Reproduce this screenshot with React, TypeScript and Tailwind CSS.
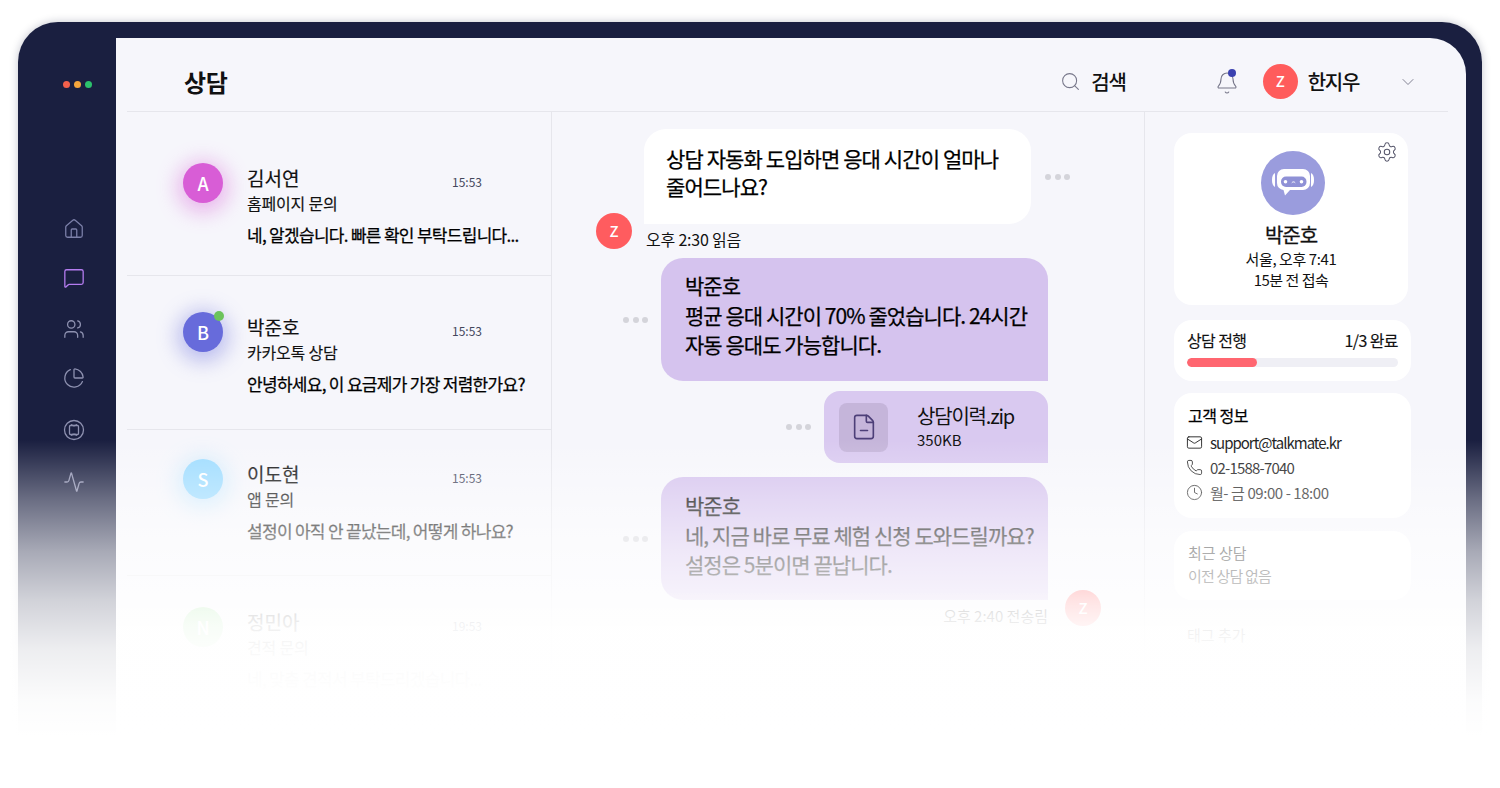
import { Activity, Bell, ChartPie, ChevronDown, Clock, FileMinus, House, Mail, MessageSquare, Phone, Search, Settings, Users } from "lucide-react";

const sideIcons = [
  { Icon: House, cls: "text-[#7b7fa8] mt-0" },
  { Icon: MessageSquare, cls: "text-[#b57cf0] mt-[27px]" },
  { Icon: Users, cls: "text-[#8e91b0] mt-[29px]" },
  { Icon: ChartPie, cls: "text-[#8e91b0] mt-[27px]" },
];

const rows = [
  { letter: "A", name: "김서연", time: "15:53", sub: "홈페이지 문의", text: "네, 알겠습니다. 빠른 확인 부탁드립니다...", box: "h-[164px] pt-[51px] border-b", avatar: "bg-[#d85dd6] shadow-[0_4px_20px_6px_rgba(216,93,214,0.4)]" },
  { letter: "B", name: "박준호", time: "15:53", sub: "카카오톡 상담", text: "안녕하세요, 이 요금제가 가장 저렴한가요?", box: "h-[154px] pt-[36px] border-b", avatar: "bg-[#676bdb] shadow-[0_4px_20px_6px_rgba(103,107,219,0.4)]", online: true },
  { letter: "S", name: "이도현", time: "15:53", sub: "앱 문의", text: "설정이 아직 안 끝났는데, 어떻게 하나요?", box: "h-[146px] pt-[29px] border-b", avatar: "bg-[#9edcff] shadow-[0_4px_20px_6px_rgba(158,220,255,0.4)]" },
  { letter: "N", name: "정민아", time: "19:53", sub: "견적 문의", text: "네, 맞춤 견적서 부탁드리겠습니다...", box: "h-[150px] pt-[31px]", avatar: "bg-[#8fe08a]" },
];

function Dots() {
  return (
    <div className="flex w-[25px] shrink-0 justify-between">
      <span className="h-[6px] w-[6px] rounded-full bg-[#d4d4da]" />
      <span className="h-[6px] w-[6px] rounded-full bg-[#d4d4da]" />
      <span className="h-[6px] w-[6px] rounded-full bg-[#d4d4da]" />
    </div>
  );
}

function BotAvatar() {
  return (
    <div className="ml-[4px] flex h-16 w-16 items-center justify-center rounded-full bg-[#9a9cdd]">
      <svg width="46" height="46" viewBox="0 0 46 46" fill="none">
        <path d="M5 13c-2 .8-3 3.500-3 7s1 6.200 3 7z" fill="#fff" />
        <path d="M41 13c2 .8 3 3.500 3 7s-1 6.200-3 7z" fill="#fff" />
        <path d="M14 9h19a7 7 0 0 1 7 7v7a7 7 0 0 1-7 7H20l-5 5.500-1.500-5.500a7 7 0 0 1-6.500-7v-7a7 7 0 0 1 7-7z" fill="#fff" />
        <rect x="11" y="16.500" width="25.500" height="10.500" rx="5" fill="#8f91d6" />
        <circle cx="15.500" cy="21.800" r="1.800" fill="#fff" />
        <circle cx="31.500" cy="21.800" r="1.800" fill="#fff" />
        <path d="M22 22.500c.7-.9 2.300-.9 3 0" stroke="#fff" strokeWidth="1" strokeLinecap="round" />
      </svg>
    </div>
  );
}

export default function App() {
  return (
    <div className="relative h-[788px] w-[1500px] overflow-hidden bg-white px-[18px] pt-[22px] font-['Noto_Sans_CJK_KR',sans-serif] text-[#111]">
      <div className="flex h-[720px] overflow-hidden rounded-t-[40px] bg-[#1a1f40] shadow-[0_0_8px_rgba(20,25,60,0.25)]">
        <aside className="flex w-[98px] shrink-0 flex-col">
          <div className="ml-[45px] mt-[59px] flex gap-[4px]">
            <span className="h-[7px] w-[7px] rounded-full bg-[#f2604c]" />
            <span className="h-[7px] w-[7px] rounded-full bg-[#f5a53c]" />
            <span className="h-[7px] w-[7px] rounded-full bg-[#2cc16c]" />
          </div>
          <div className="ml-[45px] mt-[130px] flex flex-col">
            {sideIcons.map(({ Icon, cls }, i) => (
              <Icon key={i} size={22} strokeWidth={1.4} className={cls} />
            ))}
            <svg width="22" height="22" viewBox="0 0 22 22" fill="none" stroke="#8e91b0" strokeWidth="1.300" className="mt-[30px]">
              <circle cx="11" cy="11" r="9.500" />
              <path d="M7.500 6.500h7a1 1 0 0 1 1 1v7a1 1 0 0 1-1 1h-7a1 1 0 0 1-1-1v-7a1 1 0 0 1 1-1z" />
              <path d="M8 5.500c1.800 1.500 4.200 1.500 6 0M8 16.500c1.800-1.500 4.200-1.500 6 0" />
            </svg>
            <Activity size={22} strokeWidth={1.4} className="mt-[30px] text-[#8e91b0]" />
          </div>
        </aside>

        <main className="mr-4 mt-4 flex h-[704px] flex-1 flex-col rounded-tr-[36px] bg-[#f6f6fb]">
          <header className="ml-[11px] mr-[18px] flex h-[74px] shrink-0 items-center border-b border-[#e6e6ec] pl-[57px] pt-[14px]">
            <h1 className="text-[24px] font-bold leading-none tracking-[-0.3px]">상담</h1>
            <div className="ml-auto flex items-center">
              <Search size={21} strokeWidth={1.2} className="text-[#77778a]" />
              <span className="ml-[10px] text-[20px] font-medium leading-none tracking-[-1.2px]">검색</span>
            </div>
            <div className="relative ml-[89px] mt-[2px]">
              <Bell size={24} strokeWidth={1.1} className="text-[#77778a]" />
              <span className="absolute right-[3px] -top-[2px] h-2 w-2 rounded-full bg-[#3b41b0]" />
            </div>
            <div className="ml-[24px] flex h-[35px] w-[35px] items-center justify-center rounded-full bg-[#ff5c5c] text-[15px] font-medium text-white">Z</div>
            <span className="ml-[10px] text-[20px] font-medium leading-none tracking-[-1.3px]">한지우</span>
            <ChevronDown size={20} strokeWidth={1.1} className="ml-[39px] mr-[30px] text-[#77778a]" />
          </header>

          <div className="ml-[11px] mr-[18px] flex flex-1">
            <section className="w-[425px] shrink-0 border-r border-[#e6e6ec]">
              {rows.map((r) => (
                <div key={r.letter} className={`flex border-[#e6e6ec] pl-[56px] ${r.box}`}>
                  <div className={`relative flex h-10 w-10 shrink-0 items-center justify-center rounded-full text-[18px] font-medium text-white ${r.avatar}`}>
                    {r.letter}
                    {r.online && <span className="absolute right-[-1px] top-[-1px] h-[10px] w-[10px] rounded-full bg-[#6cc35c]" />}
                  </div>
                  <div className="ml-6 mt-[2px] w-[290px]">
                    <div className="flex h-[26px] items-start">
                      <span className="w-[205px] text-[19px] leading-[26px] [-webkit-text-stroke-width:0.2px]">{r.name}</span>
                      <span className="mt-[4px] text-[12px] leading-[26px] text-[#44475c]">{r.time}</span>
                    </div>
                    <div className="text-[16px] leading-[24px] tracking-[-0.2px] [-webkit-text-stroke-width:0.15px]">{r.sub}</div>
                    <div className="mt-[8px] whitespace-nowrap text-[17px] leading-[24px] tracking-[-0.7px] text-black [-webkit-text-stroke-width:0.25px]">{r.text}</div>
                  </div>
                </div>
              ))}
            </section>

            <section className="relative w-[593px] shrink-0 border-r border-[#e6e6ec] pt-[17px]">
              <div className="ml-[92px] flex items-center gap-[14px]">
                <div className="h-[95px] w-[387px] rounded-[22px] rounded-bl-none bg-white px-[22px] py-[15px] text-[21px] leading-[28px] tracking-[-0.9px] text-black [-webkit-text-stroke-width:0.25px]">
                  상담 자동화 도입하면 응대 시간이 얼마나 줄어드나요?
                </div>
                <Dots />
              </div>
              <div className="absolute left-[44px] top-[101px] flex h-9 w-9 items-center justify-center rounded-full bg-[#ff5c5f] text-[15px] font-medium text-white">Z</div>
              <div className="ml-[94px] mt-[5px] h-[29px] text-[16px] leading-[20px] tracking-[-0.2px]">오후 2:30 읽음</div>

              <div className="flex items-center justify-end gap-[13px] pr-[96px]">
                <Dots />
                <div className="h-[123px] w-[387px] rounded-[22px] rounded-br-none bg-[#d5c3ee] px-[24px] pt-[13px] text-[21px] leading-[29px] tracking-[-0.95px] text-black [-webkit-text-stroke-width:0.25px]">
                  박준호
                  <div className="mt-[1px] w-[350px]">평균 응대 시간이 70% 줄었습니다. 24시간 자동 응대도 가능합니다.</div>
                </div>
              </div>

              <div className="mt-[10px] flex items-center justify-end gap-[13px] pr-[96px]">
                <Dots />
                <div className="flex h-[72px] w-[224px] items-center rounded-[16px] rounded-br-none bg-[#d9c9f0] pl-[15px]">
                  <div className="flex h-[49px] w-[49px] items-center justify-center rounded-[8px] bg-[#c5b5da]">
                    <FileMinus size={28} strokeWidth={1.4} className="text-[#4d3f78]" />
                  </div>
                  <div className="ml-[29px]">
                    <div className="text-[20px] leading-[26px] tracking-[-1.2px]">상담이력.zip</div>
                    <div className="text-[15px] leading-[22px]">350KB</div>
                  </div>
                </div>
              </div>

              <div className="mt-[14px] flex items-center justify-end gap-[13px] pr-[96px]">
                <Dots />
                <div className="h-[123px] w-[387px] rounded-[22px] rounded-br-none bg-[#d5c3ee] px-[24px] pt-[14px] text-[21px] leading-[29px] tracking-[-0.95px] text-black [-webkit-text-stroke-width:0.25px]">
                  박준호
                  <div className="mt-[1px] w-[350px]">네, 지금 바로 무료 체험 신청 도와드릴까요? 설정은 5분이면 끝납니다.</div>
                </div>
              </div>

              <div className="mt-[5px] pr-[96px] text-right text-[15px] leading-[22px]">오후 2:40 전송림</div>
              <div className="absolute left-[513px] top-[478px] flex h-9 w-9 items-center justify-center rounded-full bg-[#ff5c5f] text-[15px] font-medium text-white">Z</div>

              <div className="ml-[48px] mt-[70px] flex h-[45px] w-[507px] items-center rounded-[12px] border border-[#e6e6ec] px-3 text-[15px]">메시지를 입력하세요</div>
            </section>

            <aside className="flex-1 pl-[29px] pr-[37px] pt-[21px]">
              <div className="relative flex h-[172px] w-[234px] flex-col items-center rounded-[18px] bg-white pt-[18px]">
                <Settings size={22} strokeWidth={1.1} className="absolute right-[10px] top-[8px] text-[#55556a]" />
                <BotAvatar />
                <div className="mt-[6px] text-[20px] leading-[28px] tracking-[-1px] [-webkit-text-stroke-width:0.3px]">박준호</div>
                <div className="text-[15px] leading-[20px] tracking-[-0.4px]">서울, 오후 7:41</div>
                <div className="mt-[1px] text-[15px] leading-[20px] tracking-[-0.5px]">15분 전 접속</div>
              </div>

              <div className="mt-[15px] h-[61px] rounded-[18px] bg-white px-[13px] pt-[9px]">
                <div className="flex justify-between text-[16px] leading-[22px] tracking-[-0.6px] [-webkit-text-stroke-width:0.15px]">
                  <span>상담 전행</span>
                  <span>1/3 완료</span>
                </div>
                <div className="mt-[7px] h-[9px] overflow-hidden rounded-full bg-[#efeff5]">
                  <div className="h-full w-1/3 rounded-full bg-[#ff6670]" />
                </div>
              </div>

              <div className="mt-[12px] h-[125px] rounded-[18px] bg-white px-[13px] pt-[11px] text-[15px] leading-[25px] text-[#222]">
                <div className="ml-[1px] text-[16px] leading-[22px] tracking-[-0.5px] text-black [-webkit-text-stroke-width:0.25px]">고객 정보</div>
                <div className="mt-[4px] flex items-center">
                  <Mail size={17} strokeWidth={1.3} className="-ml-[1px] mr-[7px]" />
                  <span className="tracking-[-1px]">support@talkmate.kr</span>
                </div>
                <div className="flex items-center">
                  <Phone size={17} strokeWidth={1.3} className="-ml-[1px] mr-[7px]" />
                  <span className="tracking-[-0.8px]">02-1588-7040</span>
                </div>
                <div className="flex items-center">
                  <Clock size={17} strokeWidth={1.3} className="-ml-[1px] mr-[7px]" />
                  <span className="tracking-[-0.43px]">월- 금 09:00 - 18:00</span>
                </div>
              </div>

              <div className="mt-[13px] h-[69px] rounded-[18px] bg-white px-[14px] pt-[11px] text-[#222]">
                <div className="text-[15px] leading-[22px]">최근 상담</div>
                <div className="text-[15px] leading-[24px] tracking-[-0.8px]">이전 상담 없음</div>
              </div>

              <div className="ml-[13px] mt-[24px] text-[15px] leading-[22px]">태그 추가</div>
            </aside>
          </div>
        </main>
      </div>

      {/* bottom fade over the whole window */}
      <div className="pointer-events-none absolute inset-x-0 bottom-0 h-[348px] bg-[linear-gradient(to_bottom,rgba(255,255,255,0)_0%,rgba(255,255,255,0.35)_17%,rgba(255,255,255,0.62)_32%,rgba(255,255,255,0.8)_46%,rgba(255,255,255,0.92)_60%,rgba(255,255,255,0.985)_75%,#fff_85%)]" />
      {/* content fades out sooner than the dark frame */}
      <div className="pointer-events-none absolute bottom-0 left-[116px] h-[198px] w-[1350px] bg-[linear-gradient(to_bottom,rgba(255,255,255,0)_0%,rgba(255,255,255,0.5)_18%,rgba(255,255,255,0.7)_35%,rgba(255,255,255,0.85)_55%,#fff_75%)]" />
    </div>
  );
}
